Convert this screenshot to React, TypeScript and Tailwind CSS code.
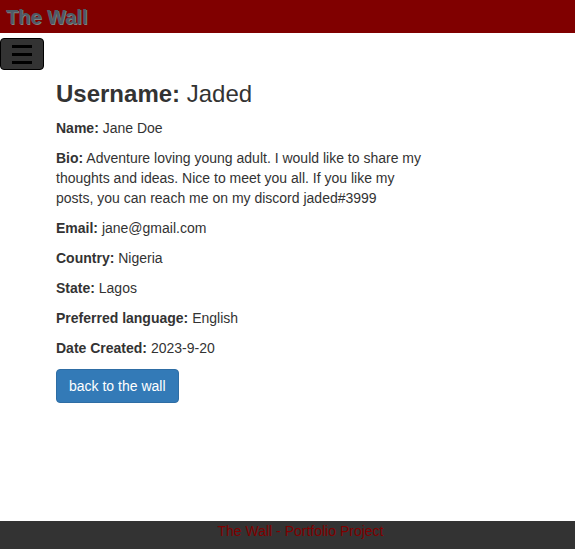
export default function App() {
  const font = { fontFamily: '"Liberation Sans", Arial, sans-serif' };
  return (
    <div className="min-h-screen flex flex-col bg-white text-[#333] text-[14px] leading-[20px]" style={font}>
      <header className="h-[33px] bg-[#800000] flex items-center px-[6px]">
        <h1 className="text-[20px] font-bold text-[#4f5b66] [text-shadow:1px_1px_0_#808080]">The Wall</h1>
      </header>
      <div className="pt-[5px]">
        <button className="w-[44px] h-[32px] bg-[#333] border border-black rounded-[4px] flex items-center justify-center">
          <div className="flex flex-col gap-[5px]">
            <span className="block w-[20px] h-[3px] bg-black" />
            <span className="block w-[20px] h-[3px] bg-black" />
            <span className="block w-[20px] h-[3px] bg-black" />
          </div>
        </button>
      </div>
      <main className="flex-1 pl-[56px] w-[430px]">
        <h2 className="text-[24px] leading-[26px] mt-[11px] mb-[11px]">
          <b>Username:</b> Jaded
        </h2>
        <p className="mb-[10px]"><b>Name:</b> Jane Doe</p>
        <p className="mb-[10px]"><b>Bio:</b> Adventure loving young adult. I would like to share my thoughts and ideas. Nice to meet you all. If you like my posts, you can reach me on my discord jaded#3999</p>
        <p className="mb-[10px]"><b>Email:</b> jane@gmail.com</p>
        <p className="mb-[10px]"><b>Country:</b> Nigeria</p>
        <p className="mb-[10px]"><b>State:</b> Lagos</p>
        <p className="mb-[10px]"><b>Preferred language:</b> English</p>
        <p className="mb-[11px]"><b>Date Created:</b> 2023-9-20</p>
        <button className="bg-[#337ab7] border border-[#2e6da4] text-white rounded-[4px] px-[12px] h-[34px] text-[14px] leading-[20px]">back to the wall</button>
      </main>
      <footer className="h-[28px] bg-[#333] text-center text-[#800000] pl-[26px]">
        The Wall - Portfolio Project
      </footer>
    </div>
  );
}
